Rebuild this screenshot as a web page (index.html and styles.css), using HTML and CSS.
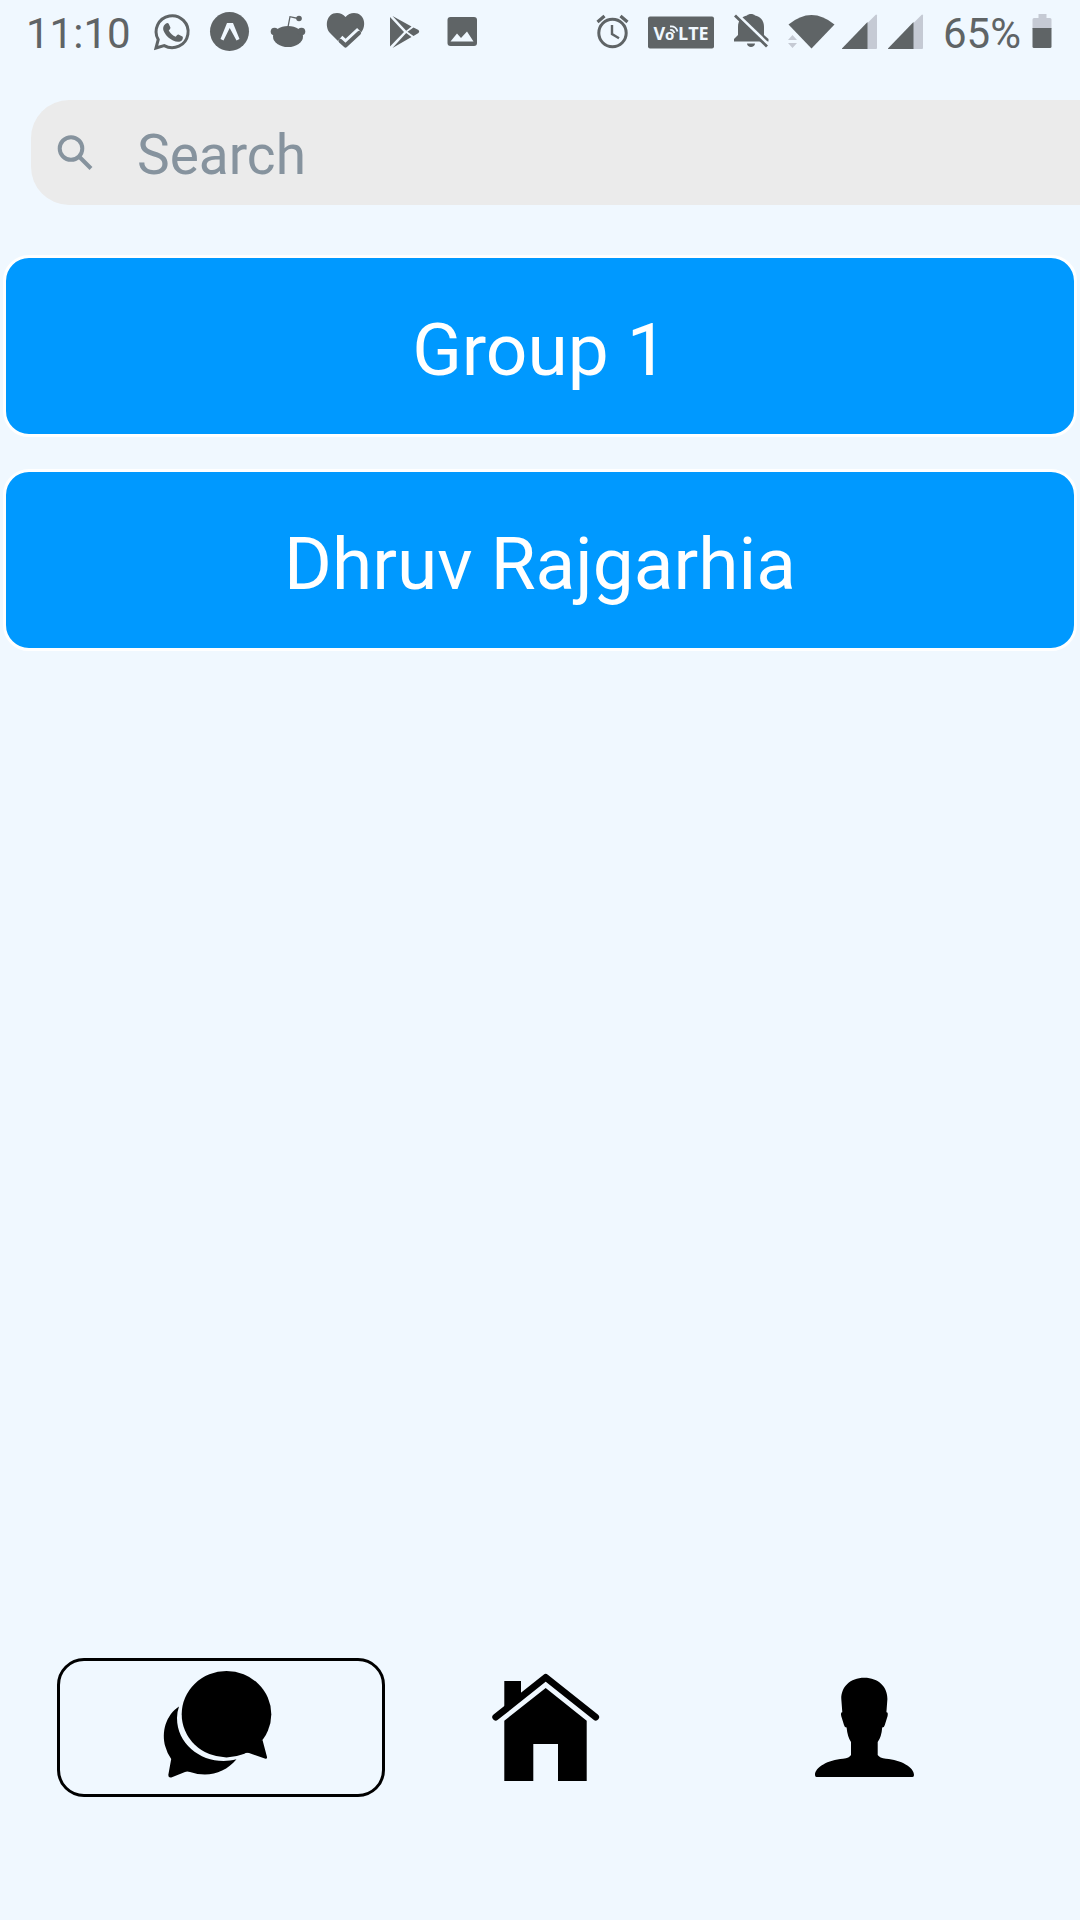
FILE: index.html
```html
<!DOCTYPE html>
<html lang="en">
<head>
<meta charset="utf-8">
<meta name="viewport" content="width=device-width, initial-scale=1">
<title>Chats</title>
<link rel="stylesheet" href="styles.css">
</head>
<body>
<div class="screen">
  <header class="status">
    <div class="status-left">
      <span class="status-text">11:10</span>
      <div class="notifications">
        <svg class="icon" width="40" height="64" viewBox="0 0 40 64" aria-hidden="true">
          <path fill="none" stroke="currentColor" stroke-width="3" d="M4 48l2.200-8.400a16 16 0 1 1 6 6z"/>
          <path fill="currentColor" d="M14 23.500c.8-.8 2.200-.8 2.700.2l1.700 3.800c.2.700 0 1.300-1.700 3 1.700 3 4 5 7 6.200 1.500-1.800 2-2.500 2.700-2.200l4 2c.8.500.6 2.500-.4 3.700-2 2.200-5.500 2-9 .3-4.500-2-8-6-9.300-9.400-1.200-3-.2-6.100 2.300-7.600z"/>
        </svg>
        <svg class="icon" width="40" height="64" viewBox="0 0 40 64" aria-hidden="true">
          <circle cx="19.500" cy="31.500" r="19.500" fill="currentColor"/>
          <path class="cut" d="M10.500 39l6.500-16h6l6.500 16-3 1.500-6.800-12.500L13.500 40.500z"/>
        </svg>
        <svg class="icon" width="40" height="64" viewBox="0 0 40 64" aria-hidden="true">
          <g fill="currentColor"><ellipse cx="20" cy="36.500" rx="15" ry="10.500"/><circle cx="6.500" cy="31.500" r="3.800"/><circle cx="33.500" cy="31.500" r="3.800"/><circle cx="31" cy="18.500" r="2.800"/></g>
          <path fill="none" stroke="currentColor" stroke-width="1.300" d="M20 27l2-10.300 8 1.800"/>
        </svg>
        <svg class="icon" width="40" height="64" viewBox="0 0 40 64" aria-hidden="true">
          <path fill="currentColor" d="M19.500 48.500L4 33C-1.500 27 0 13 11 13q5 0 8.500 4Q23 13 28 13c11 0 12.500 13 7.500 19z"/>
          <path class="cut-line" stroke-width="8.500" d="M13.500 39l6 5.500L34 31"/>
          <path fill="none" stroke="currentColor" stroke-width="4.200" stroke-linecap="round" stroke-linejoin="round" d="M14.500 41l5 4.500L33 33"/>
        </svg>
        <svg class="icon" width="40" height="64" viewBox="0 0 40 64" aria-hidden="true">
          <path fill="currentColor" d="M6 17l14 15L6 46.500zM8.500 16l19 10.500-5.300 4.300zM29.500 27.500l5 2.500q1.500 1.500 0 3l-5 3-6-4.300zM22.200 33l5.300 4L8.500 48z"/>
        </svg>
        <svg class="icon" width="40" height="64" viewBox="0 0 40 64" aria-hidden="true">
          <rect x="5.500" y="17" width="29.500" height="29" rx="3" fill="currentColor"/>
          <path class="cut" d="M8.500 41.500l6.500-8 4 4.500 6-6.500 6.500 10z"/>
        </svg>
      </div>
    </div>
    <div class="status-right">
      <svg class="icon" width="50" height="64" viewBox="0 0 50 64" aria-hidden="true">
        <g fill="none" stroke="currentColor"><circle cx="24.500" cy="33" r="13.700" stroke-width="3"/><path stroke-width="2.400" d="M24 25v9l7 4.200"/><path stroke-width="3.200" d="M9.500 22l7-6M39.500 22l-7-6"/></g>
      </svg>
      <svg class="icon" width="66" height="64" viewBox="0 0 66 64" role="img" aria-label="VoLTE">
        <rect y="16.500" width="66" height="32" rx="2" fill="currentColor"/>
        <text class="volte" y="39.500"><tspan x="5.500">V</tspan><tspan x="17" class="volte-o">o</tspan><tspan x="30">LTE</tspan></text>
        <path class="cut-line" stroke-width="1.800" d="M22 30q3-1 4.500 3M22 26.500q6-.5 7.500 5"/>
      </svg>
      <svg class="icon" width="54" height="64" viewBox="0 0 54 64" aria-hidden="true">
        <path fill="currentColor" d="M10 41.500v-2.500l4-4v-8c0-7 4-10.500 9-11.500 1.500-2 6.500-2 8 0 5 1 9 4.500 9 11.500v8l4.500 4v2.500zM23 43.500h8c0 4.500-8 4.500-8 0z"/>
        <path class="cut-line" stroke-width="3" d="M13.500 14.500l32 31"/>
        <path fill="none" stroke="currentColor" stroke-width="2.800" d="M11 15.500l32 31"/>
      </svg>
      <svg class="icon" width="44" height="64" viewBox="0 0 44 64" aria-hidden="true">
        <path fill="currentColor" d="M.5 24.500q23-19 46 0L23.500 48.500z"/>
        <path class="faded" d="M0 40l4.500-5L9 40zM0 43h9l-4.500 5z"/>
      </svg>
      <svg class="icon" width="36" height="64" viewBox="0 0 36 64" aria-hidden="true">
        <path class="faded" d="M0 48.500L34 14.500q1 0 1 1V48q0 1-1 1H0z"/><path fill="currentColor" d="M0 48.500L25.500 22v27H0z"/>
      </svg>
      <svg class="icon" width="36" height="64" viewBox="0 0 36 64" aria-hidden="true">
        <path class="faded" d="M0 48.500L34 14.500q1 0 1 1V48q0 1-1 1H0z"/><path fill="currentColor" d="M0 48.500L25.500 22v27H0z"/>
      </svg>
      <span class="status-text battery-text">65%</span>
      <svg class="icon" width="22" height="64" viewBox="0 0 22 64" aria-hidden="true">
        <path class="faded" d="M7.500 14h8v4H19q1.500 0 1.500 1.500V29h-19v-9.500Q1.500 18 3 18h4.500z"/><path fill="currentColor" d="M1.500 28h19v18.500q0 1.500-1.500 1.500H3q-1.500 0-1.500-1.500z"/>
      </svg>
    </div>
  </header>

  <label class="search">
    <svg class="search-icon" width="40" height="40" viewBox="0 0 40 40" aria-hidden="true">
      <g fill="none" stroke="currentColor" stroke-width="4"><circle cx="16" cy="15.500" r="11.300"/><path d="M24 23.500l12 12"/></g>
    </svg>
    <input class="search-input" type="search" placeholder="Search" aria-label="Search">
  </label>

  <main class="chats">
    <button class="chat" type="button">Group 1</button>
    <button class="chat" type="button">Dhruv Rajgarhia</button>
  </main>

  <nav class="tabs">
    <a class="tab tab-active" href="#chats" aria-label="Chats">
      <svg width="120" height="119" viewBox="0 0 120 119" aria-hidden="true">
        <ellipse cx="68.500" cy="46.200" rx="44.800" ry="43.200"/>
        <path d="M82 86.500L88 84.700q1.500-.2 3 .3l16.500 5.800q1.800.2 1.500-1.800L104.500 72z"/>
        <path d="M21 38.500C8 47 3 64 7.500 79q1.500 6 5.700 12L10.300 107q0 3 3 2.500L27 104q2-1 5 0C50 110 67 105 78.500 91.300C50 99 19 80 19 50q0-6 2-11.500z"/>
      </svg>
    </a>
    <a class="tab" href="#home" aria-label="Home">
      <svg width="120" height="119" viewBox="0 0 120 119" aria-hidden="true">
        <path fill="none" stroke="#000" stroke-width="6.800" stroke-linecap="round" stroke-linejoin="round" d="M9.700 49.200L59.700 9.300l50 39.900"/>
        <path d="M18.300 13H35v13L18.300 40zM18.300 52.700L59.700 20l41 32.700V113H72V76H47.300v37h-29z"/>
      </svg>
    </a>
    <a class="tab" href="#profile" aria-label="Profile">
      <svg width="120" height="119" viewBox="0 0 120 119" aria-hidden="true">
        <path d="M50.300 9.700C36 9.700 27 19 27.300 31l1 13.300Q26.500 44 27.200 48L30 57q.6 2.500 2.600 2.500Q33.500 69 37 74v13q-1.500 3-8 3.700C14 92 1 99 1 107q0 2 1.500 2h96q1.500 0 1.500-2c0-8-13-15-28-16.300q-6.500-.7-8.300-3.700V74q3.800-5 4.500-14.500 2 0 2.600-2.500l2.800-9q.7-4-1.200-3.700l1-13.300C73.700 19 64.600 9.700 50.300 9.700z"/>
      </svg>
    </a>
  </nav>
</div>
</body>
</html>
```
FILE: styles.css
```css
* {
  box-sizing: border-box;
}

body {
  margin: 0;
  background: #f0f8ff;
  font-family: Roboto, "Liberation Sans", sans-serif;
}

.screen {
  display: flex;
  flex-direction: column;
  min-height: 100vh;
}

.status {
  display: flex;
  justify-content: space-between;
  height: 64px;
  padding: 0 27px 0 26px;
  color: #5f6466;
}

.status-left,
.status-right,
.notifications {
  display: flex;
  align-items: center;
}

.status-left {
  gap: 21px;
}

.notifications {
  gap: 18px;
}

.status-right {
  gap: 10px;
}

.status-text {
  font-size: 42px;
  line-height: 64px;
  padding-top: 4px;
}

.battery-text {
  padding-left: 9px;
}

.icon {
  display: block;
  flex: none;
  overflow: visible;
}

.cut {
  fill: #f0f8ff;
}

.cut-line {
  fill: none;
  stroke: #f0f8ff;
}

.faded {
  fill: #c5cad4;
}

.volte {
  fill: #f0f8ff;
  font: bold 18px "Open Sans", sans-serif;
}

.volte-o {
  font-size: 15px;
}

.search {
  display: flex;
  align-items: center;
  gap: 42px;
  height: 105px;
  margin: 36px 0 50px 31px;
  padding-left: 24px;
  border-radius: 38px 0 0 38px;
  background: #ebebeb;
  color: #86939e;
}

.search-icon {
  flex: none;
}

.search-input {
  flex: 1;
  min-width: 0;
  padding: 4px 0 0;
  border: 0;
  outline: 0;
  background: none;
  color: inherit;
  font: 55px/64px Roboto, "Liberation Sans", sans-serif;
  appearance: none;
}

.search-input::placeholder {
  color: #86939e;
  opacity: 1;
}

.chats {
  display: flex;
  flex-direction: column;
  gap: 32px;
  padding: 0 3px;
}

.chat {
  min-height: 182px;
  padding: 8px 0 0;
  border: 3px solid #fff;
  border-radius: 26px;
  background: #0099ff;
  color: #fff;
  font: 73px/86px Roboto, "Liberation Sans", sans-serif;
}

.tabs {
  display: grid;
  grid-template-columns: repeat(3, 1fr);
  margin: auto 39px 123px 57px;
}

.tab {
  display: flex;
  align-items: center;
  justify-content: center;
  height: 139px;
  padding-right: 6px;
  border: 3px solid transparent;
  border-radius: 27px;
}

.tab-active {
  border-color: #000;
}
```
